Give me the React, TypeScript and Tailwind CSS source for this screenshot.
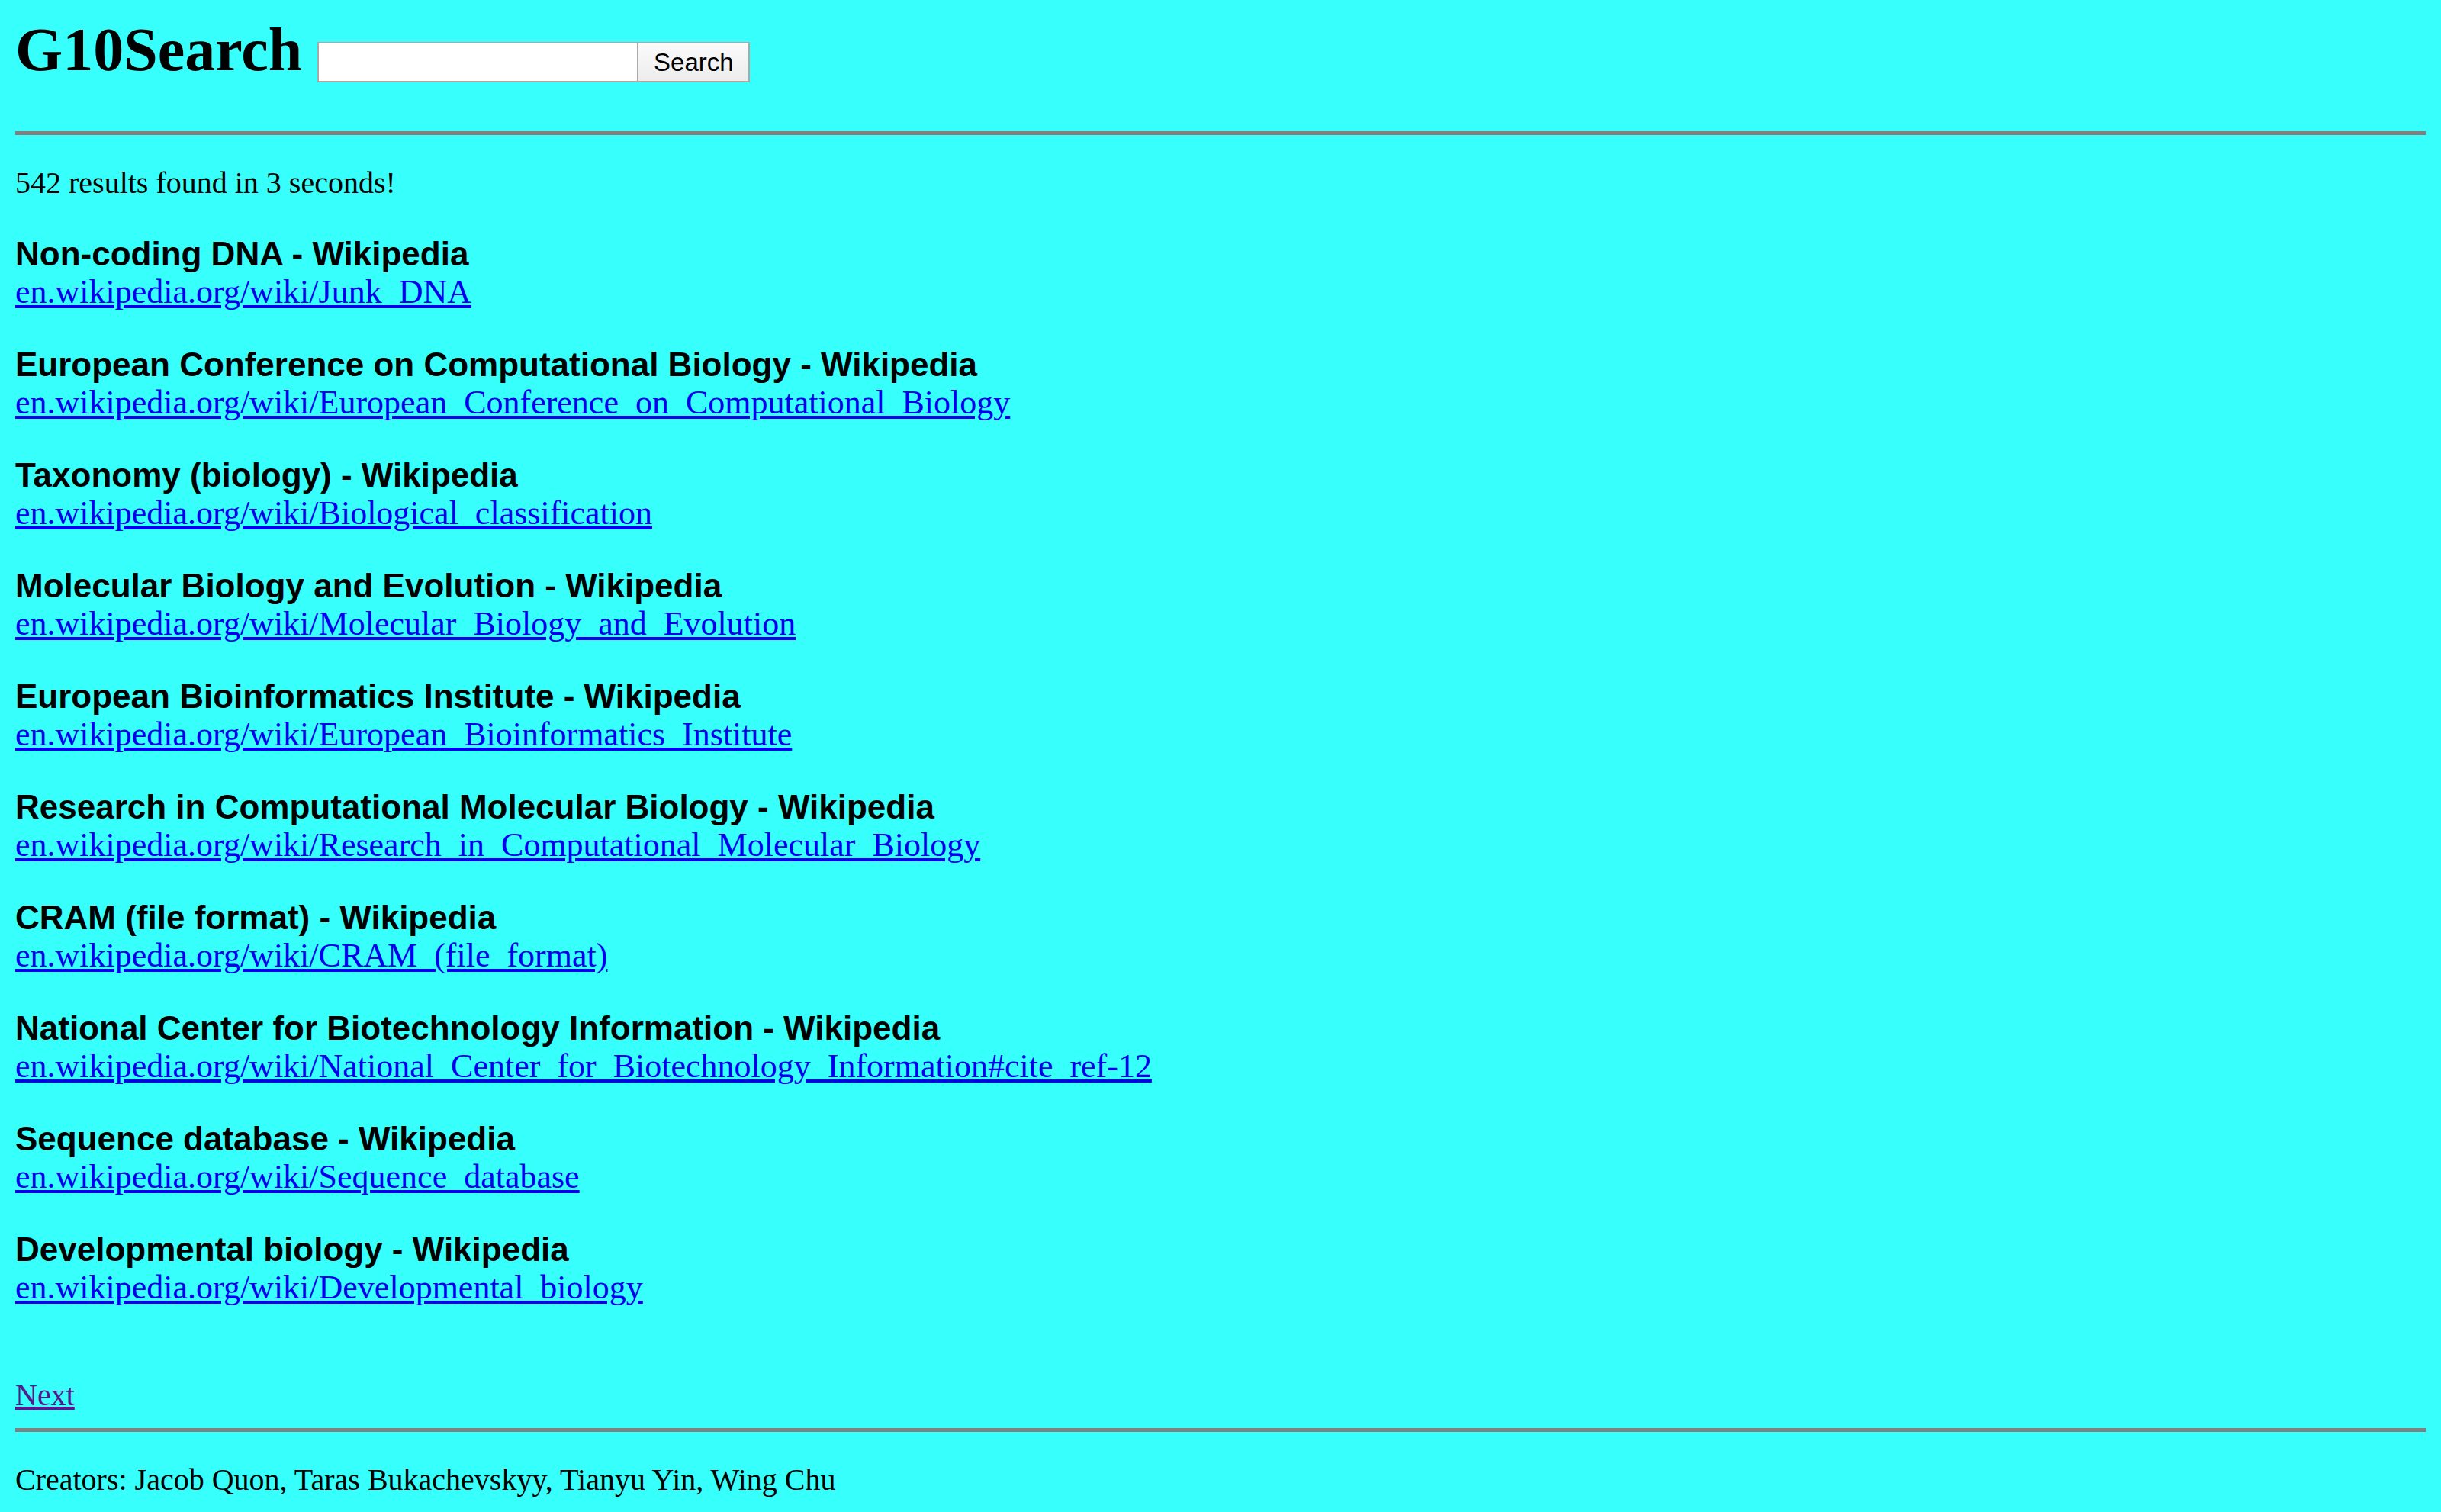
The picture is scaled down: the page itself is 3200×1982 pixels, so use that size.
import React from 'react';

const results = [
  { title: 'Non-coding DNA - Wikipedia', url: 'en.wikipedia.org/wiki/Junk_DNA' },
  {
    title: 'European Conference on Computational Biology - Wikipedia',
    url: 'en.wikipedia.org/wiki/European_Conference_on_Computational_Biology',
  },
  { title: 'Taxonomy (biology) - Wikipedia', url: 'en.wikipedia.org/wiki/Biological_classification' },
  {
    title: 'Molecular Biology and Evolution - Wikipedia',
    url: 'en.wikipedia.org/wiki/Molecular_Biology_and_Evolution',
  },
  {
    title: 'European Bioinformatics Institute - Wikipedia',
    url: 'en.wikipedia.org/wiki/European_Bioinformatics_Institute',
  },
  {
    title: 'Research in Computational Molecular Biology - Wikipedia',
    url: 'en.wikipedia.org/wiki/Research_in_Computational_Molecular_Biology',
  },
  { title: 'CRAM (file format) - Wikipedia', url: 'en.wikipedia.org/wiki/CRAM_(file_format)' },
  {
    title: 'National Center for Biotechnology Information - Wikipedia',
    url: 'en.wikipedia.org/wiki/National_Center_for_Biotechnology_Information#cite_ref-12',
  },
  { title: 'Sequence database - Wikipedia', url: 'en.wikipedia.org/wiki/Sequence_database' },
  { title: 'Developmental biology - Wikipedia', url: 'en.wikipedia.org/wiki/Developmental_biology' },
];

function Result({ title, url }: { title: string; url: string }) {
  return (
    <div className="text-[44px] leading-[50px]">
      <div className="font-['Liberation_Sans',Arial,sans-serif] font-bold text-black">{title}</div>
      <a href="#" className="block w-fit text-[#0000ee] underline">
        {url}
      </a>
    </div>
  );
}

export default function App() {
  return (
    <div className="min-h-screen overflow-hidden bg-[#37fffb] px-[20px] pt-[25px] pb-[40px] font-['Liberation_Serif','Times_New_Roman',serif] text-black">
      <div className="flex items-start">
        <h1 className="text-[80px] leading-[80px] font-bold">G10Search</h1>
        <input
          type="text"
          className="ml-[20px] mt-[30px] h-[53px] w-[421px] border-2 border-[#a9a9a9] bg-white outline-none"
        />
        <button className="mt-[30px] flex h-[53px] w-[146px] items-center justify-center border-2 border-l-0 border-[#a9a9a9] bg-gradient-to-b from-[#fbfbfb] to-[#ececec] font-['Liberation_Sans',Arial,sans-serif] text-[33px] text-black">
          Search
        </button>
      </div>

      <div className="mt-[64px] h-[5px] bg-[#808080]" />

      <p className="mt-[40px] text-[40px] leading-[46px]">542 results found in 3 seconds!</p>

      <div className="mt-[45px] flex flex-col gap-[45px]">
        {results.map((r) => (
          <Result key={r.url} title={r.title} url={r.url} />
        ))}
      </div>

      <a href="#" className="mt-[93px] block w-fit text-[40px] leading-[46px] text-[#551a8b] underline">
        Next
      </a>

      <div className="mt-[20px] h-[5px] bg-[#808080]" />

      <p className="mt-[40px] text-[40px] leading-[46px]">
        Creators: Jacob Quon, Taras Bukachevskyy, Tianyu Yin, Wing Chu
      </p>
    </div>
  );
}
